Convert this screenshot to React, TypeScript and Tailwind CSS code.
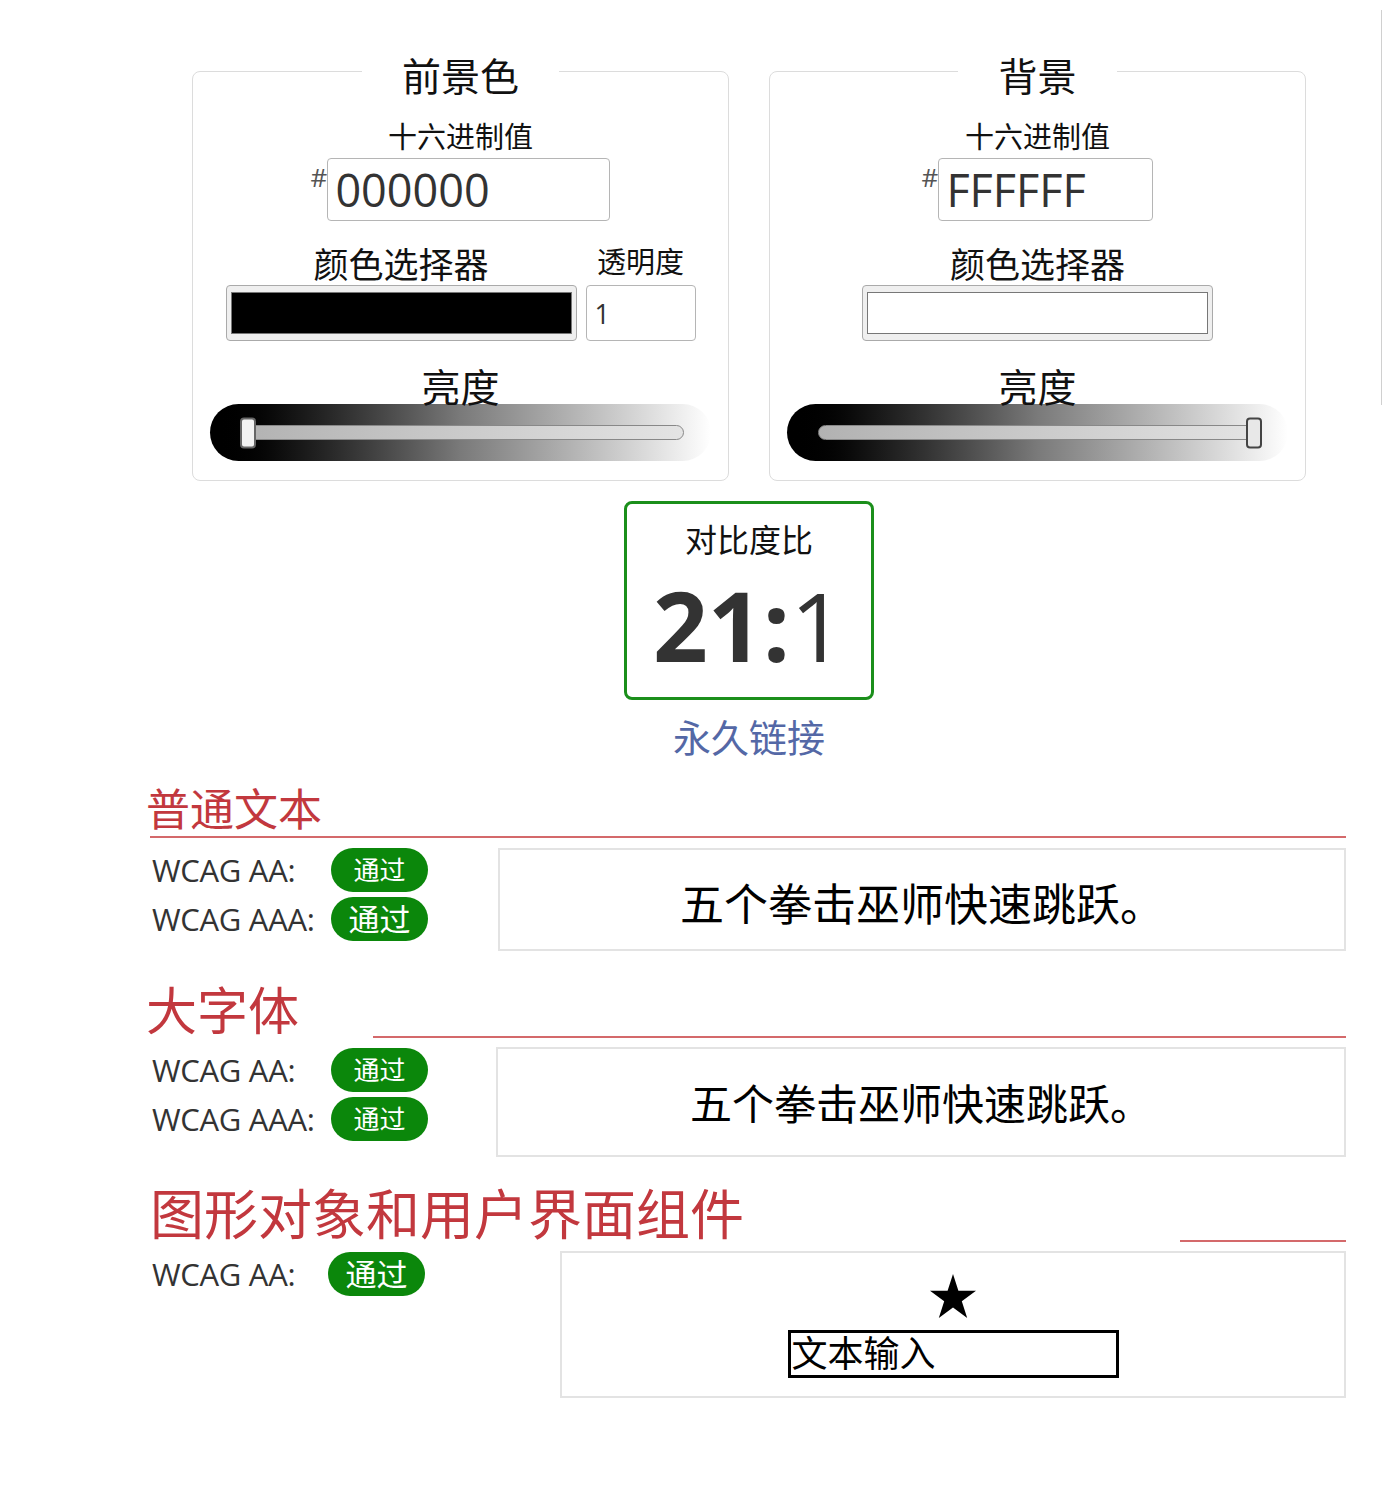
import React from 'react';

function Badge({ size }: { size: 'sm' | 'lg' }) {
  return (
    <span
      className={`flex h-[44px] w-[97px] shrink-0 items-center justify-center rounded-full bg-[#0b870b] leading-none text-white ${
        size === 'lg' ? 'text-[31px]' : 'text-[26px]'
      }`}
    >
      通过
    </span>
  );
}

function Rule({ label, badge, labelWidth }: { label: string; badge: 'sm' | 'lg'; labelWidth: string }) {
  return (
    <div className="flex h-[44px] items-center">
      <span className={`${labelWidth} shrink-0 pl-[6px] text-[31px] tracking-[-0.3px] text-[#333]`}>{label}</span>
      <Badge size={badge} />
    </div>
  );
}

function Brightness({ thumb }: { thumb: 'left' | 'right' }) {
  return (
    <div className="mx-[17px] flex h-[57px] items-center rounded-full bg-linear-to-r from-black via-[#7a7a7a] to-white pl-[31px] pr-[27px]">
      <div className="relative h-[15px] flex-1 rounded-full border border-[#888] bg-linear-to-r from-[#b2b2b2] to-[#e4e4e4]">
        <span
          className={`absolute top-1/2 h-[31px] w-[16px] -translate-y-1/2 rounded-[4px] border-2 ${
            thumb === 'left' ? '-left-[2px] border-[#666] bg-[#f2f2f2]' : '-right-[2px] border-[#444] bg-[#e8e8e8]'
          }`}
        />
      </div>
    </div>
  );
}

function Swatch({ color }: { color: string }) {
  return (
    <div className="flex h-[56px] w-[351px] items-stretch rounded-[4px] border border-[#aaa] bg-[#efefef] px-[4px] py-[6px]">
      <div className={`flex-1 border border-[#777] ${color}`} />
    </div>
  );
}

function ColorCard({
  title,
  hex,
  hexWidth,
  dark,
}: {
  title: string;
  hex: string;
  hexWidth: string;
  dark: boolean;
}) {
  return (
    <fieldset className="rounded-lg border border-[#dcdcdc] px-0 pb-[19px]">
      <legend className="mx-auto px-[40px] pt-[10px] text-[39px] leading-[44px] text-[#111]">{title}</legend>
      <div className="mt-[22px] text-center text-[29px] leading-[34px] text-[#111]">十六进制值</div>
      <div className="mt-[4px] flex items-start justify-center">
        <span className="mt-[4px] text-[26px] leading-[30px] text-[#555]">#</span>
        <input
          readOnly
          value={hex}
          className={`${hexWidth} h-[63px] rounded-[4px] border border-[#b5b5b5] bg-white pl-[7px] text-[45px] text-[#333] outline-none`}
        />
      </div>
      {dark ? (
        <div className="mt-[24px] flex items-end justify-center gap-[9px]">
          <div className="flex flex-col items-center">
            <span className="text-[35px] leading-[40px] text-[#111]">颜色选择器</span>
            <Swatch color="bg-black" />
          </div>
          <div className="flex flex-col items-center">
            <span className="mb-[6px] text-[29px] leading-[34px] text-[#111]">透明度</span>
            <input
              readOnly
              value="1"
              className="h-[56px] w-[110px] rounded-[4px] border border-[#b5b5b5] bg-white pl-[8px] text-[27px] text-[#333] outline-none"
            />
          </div>
        </div>
      ) : (
        <div className="mt-[24px] flex flex-col items-center">
          <span className="text-[35px] leading-[40px] text-[#111]">颜色选择器</span>
          <Swatch color="bg-white" />
        </div>
      )}
      <div className="mt-[29px] text-center text-[39px] leading-[34px] text-[#111]">亮度</div>
      <Brightness thumb={dark ? 'left' : 'right'} />
    </fieldset>
  );
}

function SampleBox({ className, children }: { className: string; children: React.ReactNode }) {
  return <div className={`border-2 border-[#e3e3e3] ${className}`}>{children}</div>;
}

export default function App() {
  return (
    <div className="flex min-h-[1498px] bg-white font-['Open_Sans','Noto_Sans_CJK_SC',sans-serif]">
      <main className="w-[1381px] shrink-0 pb-[100px]">
        <div className="ml-[146px] w-[1200px]">
          <div className="ml-[46px] mr-[40px] pt-[44px]">
            <div className="grid grid-cols-2 gap-[40px]">
              <ColorCard title="前景色" hex="000000" hexWidth="w-[283px]" dark />
              <ColorCard title="背景" hex="FFFFFF" hexWidth="w-[215px]" dark={false} />
            </div>

            <div className="mx-auto mt-[20px] flex h-[199px] w-[250px] flex-col items-center rounded-lg border-[3px] border-[#1b8f1b] pt-[17px]">
              <div className="text-[32px] leading-[38px] text-[#111]">对比度比</div>
              <div className="mt-[18px] text-[96px] leading-[96px] text-[#333]">
                <span className="font-bold">21:</span>
                <span>1</span>
              </div>
            </div>
            <div className="mt-[15px] text-center text-[38px] leading-[44px] text-[#5468a6]">永久链接</div>
          </div>

          {/* normal text */}
          <section className="mt-[24px]">
            <h2 className="ml-[4px] border-b-2 border-[#d4696b] text-[44px] leading-[53px] text-[#c2383e]">
              <span className="-ml-[4px]">普通文本</span>
            </h2>
            <div className="mt-[10px] flex items-start">
              <div className="flex w-[352px] shrink-0 flex-col gap-[5px]">
                <Rule label="WCAG AA:" badge="sm" labelWidth="w-[185px]" />
                <Rule label="WCAG AAA:" badge="lg" labelWidth="w-[185px]" />
              </div>
              <SampleBox className="flex h-[103px] flex-1 items-center justify-center pt-[8px]">
                <span className="text-[44px] leading-[56px] text-black">五个拳击巫师快速跳跃。</span>
              </SampleBox>
            </div>
          </section>

          {/* large text */}
          <section className="mt-[32px]">
            <div className="flex items-end">
              <h2 className="w-[227px] shrink-0 text-[51px] leading-[54px] text-[#c2383e]">大字体</h2>
              <div className="mb-[-1px] h-[2px] flex-1 bg-[#d4696b]" />
            </div>
            <div className="mt-[10px] flex items-start">
              <div className="flex w-[350px] shrink-0 flex-col gap-[5px] pt-[1px]">
                <Rule label="WCAG AA:" badge="sm" labelWidth="w-[185px]" />
                <Rule label="WCAG AAA:" badge="sm" labelWidth="w-[185px]" />
              </div>
              <SampleBox className="flex h-[110px] flex-1 items-center justify-center pt-[4px]">
                <span className="text-[42px] leading-[54px] text-black">五个拳击巫师快速跳跃。</span>
              </SampleBox>
            </div>
          </section>

          {/* graphics and UI */}
          <section className="mt-[29px]">
            <div className="flex items-end">
              <h2 className="w-[1034px] shrink-0 pl-[4px] text-[54px] leading-[56px] text-[#c2383e]">
                图形对象和用户界面组件
              </h2>
              <div className="h-[2px] flex-1 bg-[#d4696b]" />
            </div>
            <div className="mt-[9px] flex items-start">
              <div className="w-[414px] shrink-0 pt-[1px]">
                <Rule label="WCAG AA:" badge="lg" labelWidth="w-[182px]" />
              </div>
              <SampleBox className="flex h-[147px] flex-1 flex-col items-center pt-[21px]">
                <svg width="46" height="44" viewBox="0 0 46 44" aria-hidden="true">
                  <polygon
                    fill="#000"
                    points="23,0 28.4,16.8 46,16.8 31.8,27.2 37.2,44 23,33.6 8.8,44 14.2,27.2 0,16.8 17.6,16.8"
                  />
                </svg>
                <div className="mt-[12px] flex h-[48px] w-[331px] items-center border-[3px] border-black pl-[1px] text-[36px] leading-none text-black">
                  文本输入
                </div>
              </SampleBox>
            </div>
          </section>
        </div>
      </main>
      <aside className="mt-[10px] h-[395px] w-[17px] border-l border-[#d0d0d0]" />
    </div>
  );
}
